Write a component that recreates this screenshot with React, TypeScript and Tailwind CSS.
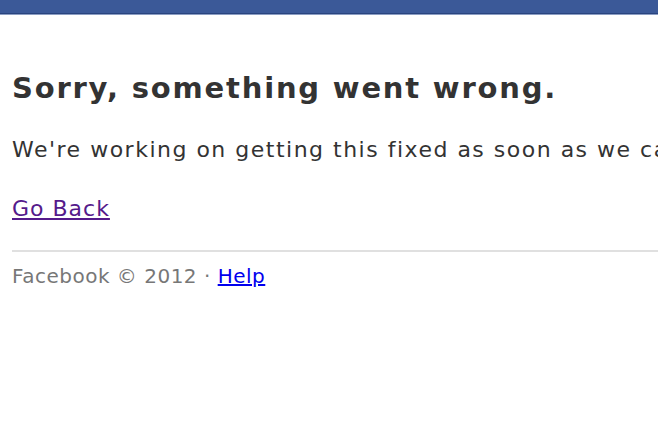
export default function App() {
  return (
    <div className="min-h-[432px] w-[658px] overflow-hidden bg-white font-['DejaVu_Sans',sans-serif]">
      {/* top bar */}
      <div className="h-[14px] bg-[#3b5998] border-b border-[#29447e]" />
      <div className="h-px bg-[#8b9dc3]" />

      <div className="pl-3">
        <h1 className="mt-[56px] whitespace-nowrap text-[29px] font-bold leading-[34px] tracking-[1.8px] text-[#333]">
          Sorry, something went wrong.
        </h1>
        <p className="mt-[32px] whitespace-nowrap text-[22px] leading-[26px] tracking-[1.5px] text-[#333]">
          We're working on getting this fixed as soon as we can.
        </p>
        <a
          href="#"
          className="mt-[33px] block w-fit text-[22px] leading-[26px] tracking-[1px] text-[#551a8b] underline"
        >
          Go Back
        </a>
        <div className="mt-[28px] border-t-2 border-[#e0e0e0]" />
        <div className="mt-[12px] text-[20px] leading-[24px] tracking-[0.5px] text-[#777]">
          Facebook © 2012 ·{" "}
          <a href="#" className="text-[#0000ee] underline">
            Help
          </a>
        </div>
      </div>
    </div>
  );
}
